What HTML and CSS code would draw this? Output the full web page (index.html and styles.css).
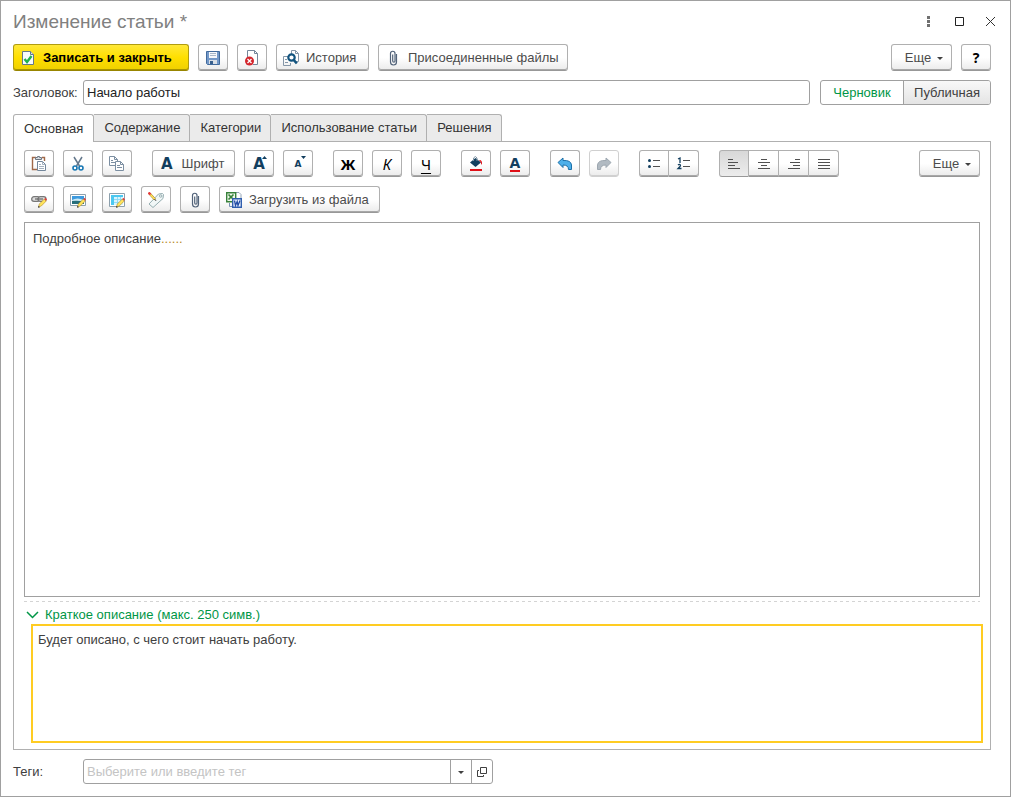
FILE: index.html
```html
<!DOCTYPE html>
<html lang="ru">
<head>
<meta charset="utf-8">
<title>Изменение статьи</title>
<link rel="stylesheet" href="styles.css">
</head>
<body>
<svg class="defs" aria-hidden="true">
  <symbol id="clip" viewBox="0 0 16 16"><path d="M11.500 4v8a3 3 0 0 1-6 0V3.500a2 2 0 0 1 4.500 0V11a1 1 0 0 1-2.300 0V4.500" fill="none" stroke="#53647a" stroke-width="1.200"/></symbol>
  <symbol id="pencil" viewBox="0 0 16 16"><path d="M7.500 15l.8-3 5-5 2 2-5 5z" fill="#ffe45c" stroke="#a07a20" stroke-width=".5"/><path d="M13.300 7l1-1.200 1.700 1.700-1 1.200z" fill="#e43a3a"/><path d="M7 15.800l.5-2 1.500 1.500z" fill="#333"/></symbol>
  <symbol id="caret" viewBox="0 0 6 4"><path d="M0 1h6L3 4z" fill="#404040"/></symbol>
</svg>
<main class="window">
  <header class="title-bar">
    <h1 class="title">Изменение статьи *</h1>
    <button class="win-btn" aria-label="Меню"><svg width="16" height="16" viewBox="0 0 16 16"><path d="M7 2h3v3H7zM7 6h3v3H7zM7 10h3v3H7z" fill="#707070"/></svg></button>
    <button class="win-btn" aria-label="Развернуть"><svg width="16" height="16" viewBox="0 0 16 16"><path d="M4.500 3.500h8v8h-8z" fill="none" stroke="#222"/></svg></button>
    <button class="win-btn" aria-label="Закрыть"><svg width="16" height="16" viewBox="0 0 16 16"><path d="M4 3l9 9M13 3l-9 9" fill="none" stroke="#333"/></svg></button>
  </header>

  <div class="commands">
    <button class="btn wide primary"><svg class="icon" viewBox="0 0 16 16"><path d="M2.500 1.500h8l3 3v10h-11z" fill="#f8fbfd" stroke="#65798a"/><path d="M10.500 1.500v3h3" fill="#dce6ee" stroke="#65798a"/><path d="M4.500 9l2.500 3 4.500-6" fill="none" stroke="#23b14d" stroke-width="2.400"/></svg>Записать и закрыть</button>
    <button class="btn" aria-label="Записать"><svg class="icon" viewBox="0 0 16 16"><path d="M1.500 1.500h13v13h-12l-1-1z" fill="#7398c8" stroke="#416a9c"/><path d="M4 2h8v6H4z" fill="#f6f8fb"/><path d="M5 3.500h6M5 5.500h6" stroke="#a9b7c8"/><path d="M4 10h8v4H4z" fill="#d9dfe6"/><path d="M5 11h3v3H5z" fill="#385f8d"/></svg></button>
    <button class="btn" aria-label="Пометить на удаление"><svg class="icon" viewBox="0 0 16 16"><path d="M3.500 8V.5h7l3 3v11H9" fill="#fff" stroke="#75869a"/><path d="M10.500.5v3h3" fill="none" stroke="#75869a"/><circle cx="5.500" cy="11" r="4.500" fill="#d3262d"/><path d="M3.500 9l4 4m0-4l-4 4" stroke="#fff" stroke-width="1.300"/></svg></button>
    <button class="btn wide history"><svg class="icon" viewBox="0 0 16 16"><path d="M8.500 4V.5h4l3 3v8H13M12.500.5v3h3" fill="#fff" stroke="#8496a8"/><path d="M5 6.500H.5v9h7V13M2 9.500h2M2 12.500h3" fill="none" stroke="#8496a8"/><circle cx="8.500" cy="7.500" r="3.200" fill="#fff" stroke="#13547f" stroke-width="2.200"/><path d="M10.800 10l3 3.500" stroke="#13547f" stroke-width="2.600"/></svg>История</button>
    <button class="btn wide files"><svg class="icon"><use href="#clip"/></svg>Присоединенные файлы</button>
    <button class="btn more push">Еще<svg class="caret"><use href="#caret"/></svg></button>
    <button class="btn help">?</button>
  </div>

  <div class="field-row">
    <label class="field-label" for="heading">Заголовок:</label>
    <input class="text-input" id="heading" type="text" value="Начало работы">
    <div class="switch" role="radiogroup" aria-label="Состояние">
      <label class="option draft"><input type="radio" name="state" checked><span>Черновик</span></label>
      <label class="option public"><input type="radio" name="state"><span>Публичная</span></label>
    </div>
  </div>

  <div class="tabs" role="tablist">
    <button class="tab active" role="tab" aria-selected="true">Основная</button>
    <button class="tab" role="tab">Содержание</button>
    <button class="tab" role="tab">Категории</button>
    <button class="tab" role="tab">Использование статьи</button>
    <button class="tab" role="tab">Решения</button>
  </div>

  <section class="panel">
    <div class="toolbar">
      <div class="group">
        <button class="btn" aria-label="Вставить"><svg class="icon" viewBox="0 0 16 16"><path d="M5 1.500H1.500v12H6M11 1.500h2.500V5" fill="none" stroke="#a06848" stroke-width="1.400"/><path d="M4.500 3.500v-2h2V.5h2v1h2v2z" fill="#d8dde2" stroke="#6d7782"/><path d="M6.500 5.500h5l3 3v6h-8z" fill="#fff" stroke="#73879b"/><path d="M11.500 5.500v3h3M8 8.500h2M8 10.500h5M8 12.500h5" fill="none" stroke="#8d9dae" stroke-width=".8"/></svg></button>
        <button class="btn" aria-label="Вырезать"><svg class="icon" viewBox="0 0 16 16"><path d="M4 1l5.500 9M12 1L6.500 10" fill="none" stroke="#64788c" stroke-width="1.500"/><circle cx="5" cy="12" r="2" fill="#fff" stroke="#1878b4" stroke-width="1.600"/><circle cx="11" cy="12" r="2" fill="#fff" stroke="#1878b4" stroke-width="1.600"/></svg></button>
        <button class="btn" aria-label="Копировать"><svg class="icon" viewBox="0 0 16 16"><path d="M.5.5h5l3 3v6h-8zM5.500.5v3h3M2 4.500h2M2 6.500h4" fill="#fff" stroke="#7c8fa2"/><path d="M6.500 5.500h5l3 3v6h-8zM11.500 5.500v3h3M8 9.500h3M8 11.500h5" fill="#fff" stroke="#7c8fa2"/></svg></button>
      </div>
      <div class="group">
        <button class="btn wide font"><span class="letter">A</span>Шрифт</button>
        <button class="btn" aria-label="Увеличить шрифт"><span class="letter">A</span><svg class="step" viewBox="0 0 5 3"><path d="M0 3l2.500-3L5 3z" fill="#123e5e"/></svg></button>
        <button class="btn" aria-label="Уменьшить шрифт"><span class="letter small">A</span><svg class="step" viewBox="0 0 5 3"><path d="M0 0h5L2.500 3z" fill="#123e5e"/></svg></button>
      </div>
      <div class="group">
        <button class="btn style bold">Ж</button>
        <button class="btn style italic">К</button>
        <button class="btn style underline">Ч</button>
      </div>
      <div class="group">
        <button class="btn" aria-label="Цвет фона"><svg class="icon" viewBox="0 0 16 16"><path d="M2 6.500L7.500 2 13 6.500 7.500 11z" fill="#123e5e"/><path d="M5.500 5V2Q7.500-1 9 2v3" fill="none" stroke="#8195a5"/><path d="M11 4q3.500-.5 3 5-1-1-1.500-3z" fill="#e01018"/><path d="M2 13h12v2H2z" fill="#e01018"/></svg></button>
        <button class="btn color" aria-label="Цвет текста"><span class="letter">A</span></button>
      </div>
      <div class="group">
        <button class="btn" aria-label="Отменить"><svg class="icon" viewBox="0 0 16 16"><path d="M1 6.500l5-4.500v2.500Q14 4 14.500 9v4.500h-3Q11.500 9 6 9v2.500z" fill="#4db0ea" stroke="#1c70a8" stroke-linejoin="round"/></svg></button>
        <button class="btn disabled" aria-label="Повторить" disabled><svg class="icon" viewBox="0 0 16 16"><path d="M15 6.500L10 2v2.500Q2 4 1.500 9v4.500h3Q4.500 9 10 9v2.500z" fill="#b1bac2" stroke="#9da7b0" stroke-linejoin="round"/></svg></button>
      </div>
      <div class="group joined">
        <button class="btn" aria-label="Маркированный список"><svg class="icon" viewBox="0 0 16 16"><path d="M7 4.500h7M7 10.500h7" stroke="#505050"/><circle cx="3.500" cy="4.500" r="1.500" fill="#123e5e"/><circle cx="3.500" cy="10.500" r="1.500" fill="#123e5e"/></svg></button>
        <button class="btn" aria-label="Нумерованный список"><svg class="icon" viewBox="0 0 16 16"><path d="M7 4.500h7M7 10.500h7" stroke="#505050"/><path d="M2 3l2-1v5M2 9q1-1 2-.5 1 1 0 2L2 12.500h3.500" fill="none" stroke="#123e5e" stroke-width="1.300"/></svg></button>
      </div>
      <div class="group joined">
        <button class="btn pressed" aria-label="По левому краю"><svg class="icon" viewBox="0 0 16 16"><path d="M2 3.500h5M2 6.500h10M2 9.500h7M2 12.500h12" stroke="#505050"/></svg></button>
        <button class="btn" aria-label="По центру"><svg class="icon" viewBox="0 0 16 16"><path d="M5 3.500h6M2 6.500h12M5 9.500h6M2 12.500h12" stroke="#505050"/></svg></button>
        <button class="btn" aria-label="По правому краю"><svg class="icon" viewBox="0 0 16 16"><path d="M9 3.500h5M4 6.500h10M7 9.500h7M2 12.500h12" stroke="#505050"/></svg></button>
        <button class="btn" aria-label="По ширине"><svg class="icon" viewBox="0 0 16 16"><path d="M2 3.500h12M2 6.500h12M2 9.500h12M2 12.500h12" stroke="#505050"/></svg></button>
      </div>
      <button class="btn more push">Еще<svg class="caret"><use href="#caret"/></svg></button>
    </div>

    <div class="toolbar">
      <div class="group">
        <button class="btn" aria-label="Ссылка"><svg class="icon" viewBox="0 0 16 16"><rect x=".7" y="4.700" width="8" height="4.600" rx="2.300" fill="#ddd" stroke="#777" stroke-width="1.300"/><rect x="7" y="4.700" width="8" height="4.600" rx="2.300" fill="#ddd" stroke="#777" stroke-width="1.300"/><path d="M4 7h8" stroke="#666" stroke-width="1.200"/><use href="#pencil" width="16" height="16"/></svg></button>
        <button class="btn" aria-label="Картинка"><svg class="icon" viewBox="0 0 16 16"><path d="M.5 2.500h15v11H.5z" fill="#fff" stroke="#8da0ad"/><path d="M2 4h12v8H2z" fill="#3d9ade"/><path d="M2 8q5-3 12 0v1H2z" fill="#cceaf5"/><path d="M2 9q6-1 12 1v2H2z" fill="#276f7b"/><use href="#pencil" width="16" height="16"/></svg></button>
        <button class="btn" aria-label="Таблица"><svg class="icon" viewBox="0 0 16 16"><path d="M.5 1.500h15v13H.5z" fill="#fff" stroke="#8da0ad"/><path d="M2 3h12v10H2z" fill="#d8f4fd"/><path d="M2 3h12v2H2zM2 3h3v10H2z" fill="#4cc8f0"/><path d="M5 7.500h9M5 10.500h9M8.500 5v8M11.500 5v8" stroke="#7fd6f3" stroke-width=".8"/><use href="#pencil" width="16" height="16"/></svg></button>
        <button class="btn" aria-label="Метка"><svg class="icon" viewBox="0 0 16 16"><path d="M1 12L10.500 2l4-.5 1 1-.5 4L5 15.500z" fill="#f1f7f7" stroke="#94adb0"/><circle cx="12.700" cy="4" r="1.200" fill="#fff" stroke="#94adb0"/><path d="M1.500 1.500l5.500 6" stroke="#a07a20" stroke-width="2.400"/><path d="M1.500 1.500l5.500 6" stroke="#ffe45c" stroke-width="1.500"/><path d="M.5.5l2 2" stroke="#e43a3a" stroke-width="2.400"/><path d="M6.500 7l1.500 1.800" stroke="#333"/></svg></button>
        <button class="btn" aria-label="Вложение"><svg class="icon"><use href="#clip"/></svg></button>
        <button class="btn wide load"><svg class="icon" viewBox="0 0 16 16"><path d="M9 .5h4l2 2V7H9z" fill="#fff" stroke="#93a3b5"/><path d="M3.500 11v3.500H7" fill="none" stroke="#7790b2"/><path d="M.7.700h9v9h-9z" fill="#f1f9ec" stroke="#38813b" stroke-width="1.400"/><path d="M2.500 2.500l5 5m0-5l-5 5" stroke="#38813b" stroke-width="1.700"/><path d="M6.700 6.700h8.600v8.600H6.700z" fill="#eef4ff" stroke="#315fae" stroke-width="1.400"/><path d="M8.500 8.500l1 5 1.700-4 .8 4 2-5" fill="none" stroke="#244da5" stroke-width="1.300"/></svg>Загрузить из файла</button>
      </div>
    </div>

    <div class="editor" role="textbox" aria-label="Подробное описание" aria-multiline="true" contenteditable="true" spellcheck="false">Подробное описание<span class="dots">......</span></div>

    <div class="summary">
      <button class="summary-toggle" aria-expanded="true"><svg width="13" height="8" viewBox="0 0 13 8"><path d="M1 1l5.500 5.500L12 1" fill="none" stroke="#009646" stroke-width="1.500"/></svg>Краткое описание (макс. 250 симв.)</button>
    </div>
    <textarea class="short-text" aria-label="Краткое описание" spellcheck="false">Будет описано, с чего стоит начать работу.</textarea>
  </section>

  <div class="field-row tags">
    <label class="field-label" for="tags">Теги:</label>
    <div class="combo">
      <input class="combo-input" id="tags" type="text" placeholder="Выберите или введите тег">
      <button class="combo-btn" aria-label="Список"><svg class="caret"><use href="#caret"/></svg></button>
      <button class="combo-btn" aria-label="Открыть"><svg width="10" height="10" viewBox="0 0 10 10"><path d="M3.500.5h6v6h-6zM2 3.500H.5v6h6V8" fill="none" stroke="#404040"/></svg></button>
    </div>
  </div>
</main>
</body>
</html>
```
FILE: styles.css
```css
* { box-sizing: border-box; }

body {
  margin: 0;
  font: 13px/16px "Liberation Sans", Arial, sans-serif;
  color: #404040;
  background: #fff;
}

button, input, textarea {
  margin: 0;
  font: inherit;
  color: inherit;
}

.defs { position: absolute; width: 0; height: 0; }

.window {
  display: flex;
  flex-direction: column;
  min-height: 100vh;
  padding: 0 19px 12px 12px;
  border: 1px solid #a0a0a0;
}

.title-bar {
  display: flex;
  align-items: center;
  gap: 15px;
  height: 43px;
  padding-bottom: 2px;
  margin-right: -7px;
}

.title {
  flex: 1;
  margin: 0;
  font-size: 19px;
  font-weight: 400;
  line-height: 24px;
  color: #808080;
}

.win-btn {
  display: flex;
  width: 16px;
  height: 16px;
  padding: 0;
  border: 0;
  background: none;
}

.commands, .group { display: flex; gap: 9px; }

.btn {
  display: flex;
  align-items: center;
  justify-content: center;
  position: relative;
  min-width: 30px;
  height: 27px;
  padding: 1px 6px 0;
  border: 1px solid #b0b0b0;
  border-bottom-color: #989898;
  border-radius: 3px;
  background: linear-gradient(#fff 50%, #ebebeb);
  box-shadow: inset 0 -1px #a8a8a8;
  color: #4c4c4c;
  white-space: nowrap;
}

.icon { flex: none; width: 16px; height: 16px; }

.wide { justify-content: flex-start; gap: 7px; }

.primary {
  width: 176px;
  border-color: #b09c10;
  border-bottom-color: #988500;
  background: linear-gradient(#ffe838, #ffdf00 50%, #efd000);
  box-shadow: inset 0 -1px #a89400;
  color: #000;
  font-weight: 700;
}

.history { width: 93px; }
.files { width: 190px; }
.font { width: 83px; padding-left: 8px; gap: 9px; }
.load { width: 161px; }
.push { margin-left: auto; }
.more { gap: 6px; width: 61px; padding: 1px 5px 0 10px; }
.caret { width: 6px; height: 4px; }
.help { color: #000; font: 700 14px/16px "Noto Sans", sans-serif; }

.field-row { display: flex; align-items: center; height: 25px; margin-top: 9px; }
.field-label { flex: none; width: 70px; }

.text-input {
  flex: 1;
  min-width: 0;
  height: 25px;
  padding: 0 3px;
  border: 1px solid #a0a0a0;
  border-radius: 3px;
  color: #222;
}

.switch {
  display: flex;
  height: 25px;
  margin-left: 10px;
  border: 1px solid #a0a0a0;
  border-radius: 3px;
  overflow: hidden;
}

.option { display: flex; align-items: center; justify-content: center; position: relative; }
.option input { position: absolute; opacity: 0; }
.draft { width: 82px; color: #009646; }
.public {
  width: 87px;
  border-left: 1px solid #a0a0a0;
  background: linear-gradient(#f8f8f8, #e4e4e4);
}

.tabs { display: flex; margin-top: 9px; }

.tab {
  height: 27px;
  padding: 0 9px 0 10px;
  border: 1px solid #b0b0b0;
  border-left-width: 0;
  border-bottom: 0;
  border-radius: 0 3px 0 0;
  background: #ebebeb;
  color: #333;
}

.active {
  position: relative;
  height: 28px;
  margin-bottom: -1px;
  padding: 0 10px;
  border-left-width: 1px;
  border-radius: 3px 3px 0 0;
  background: #fff;
}

.panel {
  display: flex;
  flex: 1;
  flex-direction: column;
  padding: 8px 10px 6px;
  border: 1px solid #b0b0b0;
}

.toolbar { display: flex; gap: 20px; margin-bottom: 9px; }

.joined { gap: 0; }
.joined .btn { border-radius: 0; }
.joined .btn + .btn { border-left-width: 0; }
.joined .btn:first-child { border-radius: 3px 0 0 3px; }
.joined .btn:last-child { border-radius: 0 3px 3px 0; }
.joined .pressed { background: linear-gradient(#d8d8d8, #ececec); box-shadow: none; }
.disabled { border-color: #d0d0d0; box-shadow: inset 0 -1px #d0d0d0; }

.letter { color: #123e5e; font: 700 15px/16px "DejaVu Sans", sans-serif; }
.small { font-size: 9px; }
.step { position: absolute; top: 5px; right: 6px; width: 5px; height: 3px; }
.style { color: #000; font: 15px/16px "Noto Sans", sans-serif; }
.bold { font-weight: 700; }
.italic { font-style: italic; }
.underline { text-decoration: underline; text-underline-offset: 3px; }
.color .letter { height: 16px; border-bottom: 2px solid #e01018; font-size: 14px; line-height: 14px; }

.editor {
  flex: 1;
  padding: 8px;
  border: 1px solid #a0a0a0;
  outline: 0;
}

.dots { color: #b88a28; }

.summary {
  height: 23px;
  margin-top: 4px;
  background: repeating-linear-gradient(90deg, #d4d4d4 0 3px, transparent 3px 6px) 0 0 / 100% 1px no-repeat;
}

.summary-toggle {
  display: flex;
  align-items: center;
  gap: 6px;
  padding: 6px 2px 0;
  border: 0;
  background: none;
  color: #009646;
}

.short-text {
  display: block;
  height: 119px;
  margin: 0 -3px 0 7px;
  padding: 6px 5px;
  border: 2px solid #fc2;
  outline: 0;
  resize: none;
}

.combo {
  display: flex;
  width: 410px;
  height: 25px;
  border: 1px solid #a0a0a0;
  border-radius: 3px;
}

.combo-input { flex: 1; min-width: 0; padding: 0 3px; border: 0; background: none; }
.combo-input::placeholder { color: #c4c4c4; }
.combo-btn {
  display: flex;
  align-items: center;
  justify-content: center;
  width: 21px;
  padding: 0;
  border: 0;
  border-left: 1px solid #a0a0a0;
  background: none;
}
```
